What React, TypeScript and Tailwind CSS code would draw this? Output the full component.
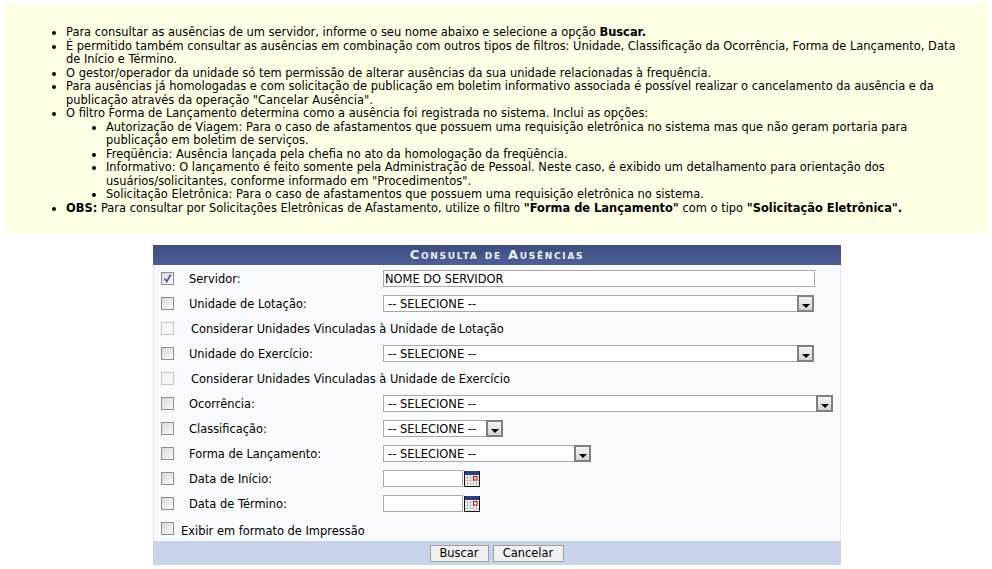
const Checkbox = ({ checked, disabled }: { checked?: boolean; disabled?: boolean }) => (
    <span
        className={`relative block w-[13px] h-[13px] shrink-0 border ${
            disabled ? "border-[#c4c4c4] bg-[#f6f6f6]" : "border-[#8e8e8e] bg-gradient-to-br from-[#d8d8d8] to-[#fbfbfb]"
        }`}
    >
        {checked && (
            <svg viewBox="0 0 11 11" className="absolute inset-0 w-[11px] h-[11px]">
                <path d="M2.5 5.5 L4.8 8.5 L8.8 1.5" fill="none" stroke="#4a5a9c" strokeWidth="1.7" />
            </svg>
        )}
    </span>
);

const Select = ({ width }: { width: string }) => (
    <div className={`flex items-center justify-between h-[17px] bg-white border border-[#a8a8a8] ${width}`}>
        <span className="pl-[4px] pt-[2px]">-- SELECIONE --</span>
        <span className="flex items-center justify-center w-[17px] h-[17px] -mr-px border-2 border-[#808080] bg-gradient-to-b from-[#f4f4f4] to-[#d4d4d4]">
            <span className="mt-[4px] border-x-[4px] border-t-[4px] border-x-transparent border-t-black"></span>
        </span>
    </div>
);

const CalendarIcon = () => (
    <svg viewBox="0 0 16 16" className="w-[16px] h-[16px] ml-[1px]">
        <rect x="0" y="0" width="16" height="16" fill="#f2f2f2" />
        <path d="M3.5 4v11M6.5 4v11M9.5 4v11M12.5 4v11M1 6.5h14M1 9.5h14M1 12.5h14" stroke="#c8c8c8" strokeWidth="1" />
        <rect x="0" y="0" width="16" height="4" fill="#2a3f7c" />
        <path d="M0.5 0v15.5h15V0" fill="none" stroke="#111" />
        <rect x="9.5" y="5.5" width="3.5" height="3.5" fill="#fff" stroke="#e00000" />
    </svg>
);

const DateField = () => (
    <div className="flex items-center">
        <div className="w-[80px] h-[17px] bg-white border border-[#a8a8a8]"></div>
        <CalendarIcon />
    </div>
);

const Row = ({ label, checked, children }: { label: string; checked?: boolean; children: React.ReactNode }) => (
    <div className="flex items-center h-[25px] pl-[7px]">
        <Checkbox checked={checked} />
        <span className="w-[209px] pl-[15px] pt-[2px]">{label}</span>
        {children}
    </div>
);

const NoteRow = ({ label }: { label: string }) => (
    <div className="flex items-center h-[25px] pl-[7px]">
        <Checkbox disabled />
        <span className="pl-[17px] pt-[2px]">{label}</span>
    </div>
);

export default function App() {
    return (
        <div className="w-[992px] h-[569px] overflow-hidden bg-white pt-[3px] text-[11.45px] text-black font-['DejaVu_Sans',Verdana,sans-serif]">
            <div className="ml-[5px] w-[983px] h-[231px] bg-[#ffffe5] pt-[23px] pl-[61px] pr-[25px] leading-[13.5px]">
                <ul className="list-disc">
                    <li>Para consultar as ausências de um servidor, informe o seu nome abaixo e selecione a opção <b>Buscar.</b></li>
                    <li>É permitido também consultar as ausências em combinação com outros tipos de filtros: Unidade, Classificação da Ocorrência, Forma de Lançamento, Data de Início e Término.</li>
                    <li>O gestor/operador da unidade só tem permissão de alterar ausências da sua unidade relacionadas à frequência.</li>
                    <li>Para ausências já homologadas e com solicitação de publicação em boletim informativo associada é possível realizar o cancelamento da ausência e da publicação através da operação "Cancelar Ausência".</li>
                    <li>
                        O filtro Forma de Lançamento determina como a ausência foi registrada no sistema. Inclui as opções:
                        <ul className="list-disc pl-[40px]">
                            <li>Autorização de Viagem: Para o caso de afastamentos que possuem uma requisição eletrônica no sistema mas que não geram portaria para publicação em boletim de serviços.</li>
                            <li>Freqüência: Ausência lançada pela chefia no ato da homologação da freqüência.</li>
                            <li>Informativo: O lançamento é feito somente pela Administração de Pessoal. Neste caso, é exibido um detalhamento para orientação dos usuários/solicitantes, conforme informado em "Procedimentos".</li>
                            <li>Solicitação Eletrônica: Para o caso de afastamentos que possuem uma requisição eletrônica no sistema.</li>
                        </ul>
                    </li>
                    <li><b>OBS:</b> Para consultar por Solicitações Eletrônicas de Afastamento, utilize o filtro <b>"Forma de Lançamento"</b> com o tipo <b>"Solicitação Eletrônica".</b></li>
                </ul>
            </div>

            <div className="ml-[153px] mt-[11px] w-[688px] bg-[#f9fafd] border-x border-[#e4e7f0]">
                <div className="-mx-px h-[20px] flex items-center justify-center bg-gradient-to-b from-[#3d4d80] to-[#4d5f94] text-[#eef1f8] font-bold text-[13px] tracking-[1.7px] [font-variant:small-caps]">
                    Consulta de Ausências
                </div>
                <div className="pt-[1px]">
                    <Row label="Servidor:" checked>
                        <div className="w-[432px] h-[17px] pl-[1px] leading-[16px] bg-white border border-[#a8a8a8]">NOME DO SERVIDOR</div>
                    </Row>
                    <Row label="Unidade de Lotação:"><Select width="w-[431px]" /></Row>
                    <NoteRow label="Considerar Unidades Vinculadas à Unidade de Lotação" />
                    <Row label="Unidade do Exercício:"><Select width="w-[431px]" /></Row>
                    <NoteRow label="Considerar Unidades Vinculadas à Unidade de Exercício" />
                    <Row label="Ocorrência:"><Select width="w-[450px]" /></Row>
                    <Row label="Classificação:"><Select width="w-[120px]" /></Row>
                    <Row label="Forma de Lançamento:"><Select width="w-[208px]" /></Row>
                    <Row label="Data de Início:"><DateField /></Row>
                    <Row label="Data de Término:"><DateField /></Row>
                    <div className="flex items-center h-[25px] pl-[7px]">
                        <Checkbox />
                        <span className="pl-[7px] pt-[6px]">Exibir em formato de Impressão</span>
                    </div>
                </div>
                <div className="-mx-px h-[24px] flex items-center justify-center gap-[4px] bg-[#c8d4e9] pr-[1px]">
                    <button className="h-[17px] w-[59px] leading-[13px] bg-[#f0f0f0] border border-[#a0a0a0]">Buscar</button>
                    <button className="h-[17px] w-[71px] leading-[13px] bg-[#f0f0f0] border border-[#a0a0a0]">Cancelar</button>
                </div>
            </div>
        </div>
    );
}
